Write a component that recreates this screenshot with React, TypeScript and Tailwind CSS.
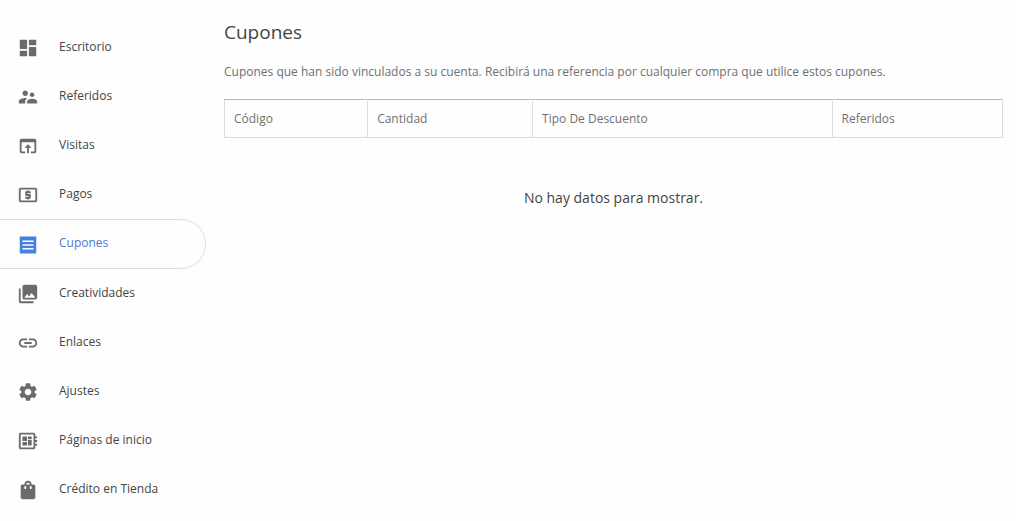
import type { ComponentType } from "react";
import {
  MdDashboard,
  MdDeveloperBoard,
  MdLink,
  MdLocalAtm,
  MdOpenInBrowser,
  MdPhotoLibrary,
  MdSettings,
  MdShoppingBag,
  MdSupervisorAccount,
} from "react-icons/md";

interface NavItem {
  path: string;
  label: string;
  icon: ComponentType<{ className?: string }>;
}

function CouponIcon({ className }: { className?: string }) {
  return (
    <svg className={className} viewBox="0 0 24 24" fill="currentColor" aria-hidden="true">
      <path d="M3 2.6h18v18.8H3V2.6zM18 17v-1.8H6V17h12zm0-4.1v-1.8H6v1.8h12zm0-4.1V7H6v1.8h12z" />
    </svg>
  );
}

const navItems: NavItem[] = [
  { path: "#escritorio", label: "Escritorio", icon: MdDashboard },
  { path: "#referidos", label: "Referidos", icon: MdSupervisorAccount },
  { path: "#visitas", label: "Visitas", icon: MdOpenInBrowser },
  { path: "#pagos", label: "Pagos", icon: MdLocalAtm },
  { path: "#cupones", label: "Cupones", icon: CouponIcon },
  { path: "#creatividades", label: "Creatividades", icon: MdPhotoLibrary },
  { path: "#enlaces", label: "Enlaces", icon: MdLink },
  { path: "#ajustes", label: "Ajustes", icon: MdSettings },
  { path: "#paginas", label: "Páginas de inicio", icon: MdDeveloperBoard },
  { path: "#credito", label: "Crédito en Tienda", icon: MdShoppingBag },
];

const columns = [
  { label: "Código", width: "w-[18.4%]" },
  { label: "Cantidad", width: "w-[21.2%]" },
  { label: "Tipo De Descuento", width: "w-[38.5%]" },
  { label: "Referidos", width: "w-[21.9%]" },
];

function Sidebar({ current }: { current: string }) {
  return (
    <nav className="w-[206px] shrink-0 pt-[23px]">
      <ul>
        {navItems.map(({ path, label, icon: Icon }) => {
          const active = path === current;
          return (
            <li key={path}>
              <a
                href={path}
                aria-current={active ? "page" : undefined}
                className={`flex items-center gap-5 pl-[17px] text-xs leading-5 ${
                  active
                    ? "h-[50px] rounded-r-full border border-l-0 border-[#dedede] text-[#4a7bd0]"
                    : "h-[49px] text-[#444444]"
                }`}
              >
                <Icon className={`mt-px size-[22px] ${active ? "text-[#4480e0]" : "text-[#6b6b6b]"}`} />
                <span className="pb-0.5">{label}</span>
              </a>
            </li>
          );
        })}
      </ul>
    </nav>
  );
}

function CouponsTable() {
  return (
    <table className="mt-[17px] w-full table-fixed border-collapse border border-t-[#b8b8b8] border-[#dcdcdc] text-xs leading-5 text-[#707070]">
      <thead>
        <tr>
          {columns.map((column) => (
            <th
              key={column.label}
              scope="col"
              className={`${column.width} h-[38px] border-r border-[#dcdcdc] px-[9px] text-left font-normal`}
            >
              {column.label}
            </th>
          ))}
        </tr>
      </thead>
    </table>
  );
}

export default function App() {
  return (
    <div className="flex min-h-screen bg-[#fefefe] font-['Open_Sans','Noto_Sans',sans-serif]">
      <Sidebar current="#cupones" />
      <main className="min-w-0 flex-1 pt-5 pr-[13px] pl-[18px]">
        <h1 className="text-[19px] leading-6 text-[#444444]">Cupones</h1>
        <p className="mt-[18px] text-xs leading-5 text-[#707070]">
          Cupones que han sido vinculados a su cuenta. Recibirá una referencia por cualquier compra que utilice estos
          cupones.
        </p>
        <CouponsTable />
        <p className="mt-[50px] text-center text-sm leading-5 text-[#444444]">No hay datos para mostrar.</p>
      </main>
    </div>
  );
}
